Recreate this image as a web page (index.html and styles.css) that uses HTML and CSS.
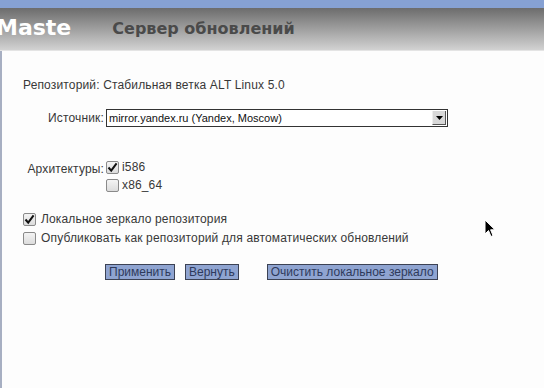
FILE: index.html
```html
<!DOCTYPE html>
<html lang="ru">
<head>
  <meta charset="UTF-8">
  <title>Сервер обновлений</title>
  <link rel="stylesheet" href="styles.css">
</head>
<body>
  <div class="topbar"></div>
  <div class="header">
    <span class="brand">Maste</span>
    <span class="title">Сервер обновлений</span>
  </div>

  <div class="content">
    <p class="repo">Репозиторий: Стабильная ветка ALT Linux 5.0</p>

    <div class="row source">
      <span class="label">Источник:</span>
      <div class="select">
        <span class="select-text">mirror.yandex.ru (Yandex, Moscow)</span>
        <span class="select-arrow">
          <svg width="7" height="4" viewBox="0 0 7 4"><path d="M0 0h7L3.5 4z" fill="#000"/></svg>
        </span>
      </div>
    </div>

    <div class="row arch">
      <span class="label">Архитектуры:</span>
      <div class="checks">
        <label class="check"><span class="box checked"><svg width="11" height="11" viewBox="0 0 11 11"><path d="M1.5 5.5 L4.2 8.6 L9.6 1.4" fill="none" stroke="#111" stroke-width="2"/></svg></span>i586</label>
        <label class="check"><span class="box"></span>x86_64</label>
      </div>
    </div>

    <div class="options">
      <label class="check"><span class="box checked"><svg width="11" height="11" viewBox="0 0 11 11"><path d="M1.5 5.5 L4.2 8.6 L9.6 1.4" fill="none" stroke="#111" stroke-width="2"/></svg></span>Локальное зеркало репозитория</label>
      <label class="check"><span class="box"></span>Опубликовать как репозиторий для автоматических обновлений</label>
    </div>

    <div class="buttons">
      <button class="btn">Применить</button>
      <button class="btn">Вернуть</button>
      <button class="btn wide">Очистить локальное зеркало</button>
    </div>
  </div>

  <svg class="cursor" width="12" height="19" viewBox="0 0 12 19">
    <path d="M1 1 L1 15 L4.5 11.5 L7 17.5 L9 16.6 L6.6 10.8 L11 10.8 Z" fill="#000" stroke="#fff" stroke-width="1"/>
  </svg>
</body>
</html>
```

FILE: styles.css
```css
body {
  margin: 0;
  background: #fdfdfd;
  font-family: "Liberation Sans", Arial, sans-serif;
  font-size: 12px;
  letter-spacing: 0.15px;
  color: #383838;
  position: relative;
  height: 388px;
  overflow: hidden;
}

.topbar {
  height: 8px;
  background: #86a1d3;
}

/* gray gradient header */
.header {
  height: 42px;
  background: linear-gradient(to bottom, #6c6c6c, #9a9a9a 45%, #d2d2d2);
  display: flex;
  align-items: center;
  gap: 41px;
  border-bottom: 1px solid #e4e4e4;
  letter-spacing: 0;
}

.brand {
  font-family: "DejaVu Sans", sans-serif;
  font-weight: bold;
  font-size: 22px;
  color: #fff;
  margin-left: -4px;
  padding-bottom: 4px;
}

.title {
  font-family: "DejaVu Sans", sans-serif;
  font-weight: bold;
  font-size: 16px;
  color: #4a4a4a;
  padding-bottom: 2px;
}

.content {
  border-left: 2px solid #a7afc2;
  box-sizing: border-box;
  height: 337px;
  padding: 27px 0 0 21px;
}

.repo {
  margin: 0;
  line-height: 14px;
}

.row {
  display: flex;
  align-items: flex-start;
}

.label {
  width: 81px;
  text-align: right;
  margin-right: 2px;
}

.source {
  margin-top: 17px;
  align-items: center;
}

.select {
  width: 340px;
  height: 16px;
  border: 1px solid #333;
  background: #fff;
  display: flex;
  align-items: center;
  justify-content: space-between;
  color: #111;
}

.select-text {
  padding-left: 2px;
  font-size: 11px;
  letter-spacing: 0;
}

.select-arrow {
  width: 14px;
  height: 14px;
  margin-right: 1px;
  background: #d8d8d8;
  border-left: 1px solid #eee;
  border-right: 1px solid #555;
  border-bottom: 1px solid #555;
  display: flex;
  align-items: center;
  justify-content: center;
  box-sizing: border-box;
}

.arch {
  margin-top: 34px;
}

.arch .label {
  padding-top: 1px;
}

.checks {
  display: flex;
  flex-direction: column;
  gap: 5px;
}

.check {
  display: flex;
  align-items: center;
  gap: 3px;
  line-height: 13px;
}

.box {
  width: 13px;
  height: 13px;
  box-sizing: border-box;
  border: 1px solid #8a8a8a;
  border-radius: 2px;
  background: linear-gradient(to bottom, #f4f4f4, #dcdcdc);
  display: flex;
  align-items: center;
  justify-content: center;
}

.options {
  margin-top: 21px;
  display: flex;
  flex-direction: column;
  gap: 6px;
}

.options .check {
  gap: 5px;
}

.buttons {
  margin: 19px 0 0 82px;
  display: flex;
}

.btn {
  font-family: "Liberation Sans", Arial, sans-serif;
  font-size: 12px;
  letter-spacing: 0;
  color: #2e3a5c;
  background: #8fa4d1;
  border: 1px solid #3c4254;
  height: 16px;
  padding: 0 3px;
  margin-right: 10px;
  line-height: 14px;
}

.btn.wide {
  margin-left: 18px;
}

.cursor {
  position: absolute;
  left: 484px;
  top: 219px;
}
```
